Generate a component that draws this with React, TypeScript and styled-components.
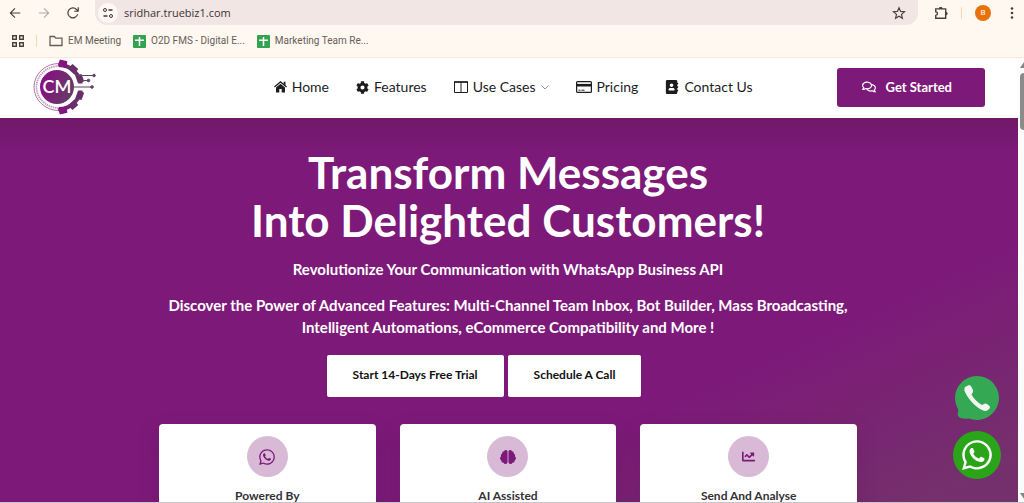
import React from "react";
import styled, { createGlobalStyle } from "styled-components";
import { FaCog, FaRegComments, FaWhatsapp, FaBrain, FaChartLine, FaAddressBook } from "react-icons/fa";

const purple = "#7d1a79";

const GlobalStyle = createGlobalStyle`
  * { box-sizing: border-box; }
  body { margin: 0; background: #fff; font-family: Lato, sans-serif; }
  h1, h2, p, ul { margin: 0; padding: 0; }
  a { color: inherit; text-decoration: none; }
  button { font: inherit; border: 0; cursor: pointer; }
  svg { display: block; flex: none; }
`;

const Window = styled.div`
  height: 100vh;
  display: flex;
  flex-direction: column;
  overflow: hidden;
`;

const Browser = styled.div`
  flex: none;
  background: #fef8f1;
  border-bottom: 1px solid #fbe6dc;
  font-family: Roboto, sans-serif;
`;

const Toolbar = styled.div`
  height: 25px;
  display: flex;
  align-items: center;
  padding: 0 4px 0 8px;
`;

const ToolButton = styled.button<{ $faded?: boolean }>`
  width: 29px;
  height: 24px;
  padding: 0;
  display: flex;
  align-items: center;
  background: none;
  color: ${(p) => (p.$faded ? "#b3aca7" : "#4a403a")};
`;

const AddressBar = styled.div`
  flex: 1;
  height: 25px;
  display: flex;
  align-items: center;
  gap: 6px;
  padding: 0 12px 0 3px;
  border-radius: 0 0 12px 12px;
  background: #f1e6e4;
`;

const SiteInfo = styled.button`
  width: 20px;
  height: 20px;
  padding: 0;
  display: grid;
  place-items: center;
  border-radius: 50%;
  background: #fef8f6;
  color: #3f3632;
`;

const Address = styled.input`
  flex: 1;
  min-width: 0;
  padding: 0;
  border: 0;
  outline: 0;
  background: none;
  color: #3c3432;
  font: 11px/16px "Open Sans", sans-serif;
`;

const BarButton = styled.button`
  padding: 0;
  background: none;
  color: #4a403a;
`;

const BrowserActions = styled.div`
  display: flex;
  align-items: center;
  gap: 13px;
  padding-left: 16px;
`;

const Divider = styled.span`
  width: 1px;
  height: 12px;
  background: #fcd5ab;
`;

const Avatar = styled.button`
  width: 16px;
  height: 16px;
  padding: 0;
  border-radius: 50%;
  background: #e8710a;
  color: #fff;
  font-size: 8px;
  line-height: 16px;
  text-align: center;
`;

const Bookmarks = styled.nav`
  height: 32px;
  display: flex;
  align-items: center;
  gap: 12px;
  padding-left: 12px;
  color: #675d58;
  font-size: 10px;
  line-height: 16px;
`;

const Bookmark = styled.a`
  display: flex;
  align-items: center;
  gap: 5px;
`;

const View = styled.div`
  flex: 1;
  min-height: 0;
  display: flex;
  border-bottom: 1px solid #c9c4c8;
`;

const Site = styled.div`
  flex: 1;
  min-width: 0;
  position: relative;
  display: flex;
  flex-direction: column;
  overflow: hidden;
`;

const Header = styled.header`
  flex: none;
  height: 60px;
  display: flex;
  align-items: center;
  padding: 0 33px 2px;
  background: #fff;
`;

const Brand = styled.a`
  margin-right: auto;
`;

const Menu = styled.nav`
  display: flex;
  gap: 27px;
  margin-right: 84px;
  color: #1d1d1f;
  font-size: 14px;
  line-height: 20px;
`;

const MenuLink = styled.a`
  display: flex;
  align-items: center;
  gap: 5px;
`;

const GetStarted = styled.button`
  height: 39px;
  display: flex;
  align-items: center;
  gap: 10px;
  padding: 0 33px 0 25px;
  border-radius: 3px;
  background: ${purple};
  color: #fff;
  font-size: 13px;
  font-weight: 700;
`;

const Hero = styled.main`
  flex: 1;
  min-height: 0;
  padding: 30px 18px 0 16px;
  overflow: hidden;
  text-align: center;
  color: #fff;
  background:
    linear-gradient(rgba(80, 20, 70, 0.3), rgba(80, 20, 70, 0) 40px),
    linear-gradient(155deg, ${purple} 70%, #74306c 95%);
`;

const Title = styled.h1`
  font-size: 44px;
  line-height: 48px;
  font-weight: 700;
`;

const Lead = styled.p`
  margin-top: 14px;
  font-size: 15px;
  line-height: 22px;
  font-weight: 700;
`;

const HeroActions = styled.div`
  display: flex;
  justify-content: center;
  gap: 4px;
  margin-top: 17px;
  padding-right: 48px;
`;

const WhiteButton = styled.button`
  height: 42px;
  padding: 0 26px 3px;
  border-radius: 2px;
  background: #fff;
  color: #111;
  font-size: 12px;
  font-weight: 700;
`;

const Cards = styled.section`
  display: grid;
  grid-template-columns: repeat(3, 1fr);
  gap: 24px;
  max-width: 698px;
  margin: 27px auto 0;
`;

const Card = styled.article`
  display: flex;
  flex-direction: column;
  align-items: center;
  gap: 9px;
  padding: 12px 16px 32px;
  border-radius: 4px;
  background: #fff;
  box-shadow: 0 8px 20px rgba(80, 20, 70, 0.25);
`;

const CardIcon = styled.span`
  width: 41px;
  height: 41px;
  display: grid;
  place-items: center;
  border-radius: 50%;
  background: #d8bad7;
  color: ${purple};
`;

const CardTitle = styled.h2`
  color: #333136;
  font-size: 12px;
  line-height: 20px;
  font-weight: 700;
`;

const Floating = styled.div`
  position: absolute;
  right: 17px;
  bottom: 23px;
  display: flex;
  flex-direction: column;
  align-items: center;
  gap: 11px;
`;

const ChatLink = styled.a`
  width: 48px;
  height: 48px;
  display: grid;
  place-items: center;
  border-radius: 50%;
  background: #2aa51a;
  color: #fff;
`;

const Scroll = styled.div`
  width: 6px;
  padding: 4px 0 0 2px;
  display: flex;
  flex-direction: column;
  gap: 5px;
  overflow: hidden;
  background: #fcfcfc;
`;

const Thumb = styled.span`
  width: 8px;
  height: 57px;
  margin-bottom: auto;
  border-radius: 4px;
  background: #8b8b8b;
`;

const Icon = ({ w = 14, h = w, box = "0 0 24 24", children }: { w?: number; h?: number; box?: string; children: React.ReactNode }) => (
  <svg width={w} height={h} viewBox={box} fill="none" stroke="currentColor" strokeWidth="2" aria-hidden="true">
    {children}
  </svg>
);

const Sheet = () => (
  <svg width="13" height="13" viewBox="0 0 13 13" aria-hidden="true">
    <rect width="13" height="13" rx="1" fill="#34a350" />
    <path d="M6.5 2v9M2 5.2h9" stroke="#fff" strokeWidth="1.5" />
  </svg>
);

const teeth = [-76, -48, -20, 20, 48, 76];

const Logo = () => (
  <svg width="64" height="58" viewBox="0 -1 64 58" role="img" aria-label="CM">
    <defs>
      <linearGradient id="brand" gradientUnits="userSpaceOnUse" x1="12" y1="20" x2="46" y2="34">
        <stop offset="0" stopColor="#85127f" />
        <stop offset="1" stopColor="#5e4560" />
      </linearGradient>
      <linearGradient id="gear" gradientUnits="userSpaceOnUse" x1="26" y1="0" x2="50" y2="0">
        <stop offset="0" stopColor="#85127f" />
        <stop offset="1" stopColor="#5e3f60" />
      </linearGradient>
    </defs>
    <g fill="none" stroke="#8a3a87">
      <path d="M26 4.500A25 23.500 0 0 0 26 51.500" strokeWidth=".7" />
      <path d="M26 7A22.500 21 0 0 0 26 49" strokeWidth="1.800" strokeDasharray="1.500 .7" opacity=".5" />
    </g>
    <path d="M26 4A24 24 0 0 1 26 52V48A20 20 0 0 0 26 8Z" fill="url(#gear)" />
    {teeth.map((a) => (
      <path
        key={a}
        d="M45 23.500L51.500 24.200V31.800L45 32.500Z"
        transform={`rotate(${a} 24 28)`}
        fill={Math.abs(a) === 76 ? "#82157c" : "#692f69"}
      />
    ))}
    <circle cx="24" cy="28" r="17" fill="url(#brand)" />
    <path d="M42.500 24.500H64V31.500H42.500Z" fill="#fff" />
    <g stroke="#5e4560" fill="#5e4560">
      <path d="M44 16.500H61M46 21.500H55M40 28H59" fill="none" strokeWidth="1.200" />
      <circle cx="61" cy="16.500" r="1.300" />
      <circle cx="55.500" cy="21.500" r="1.300" />
      <circle cx="59" cy="28" r="1.300" />
    </g>
    <text x="24" y="34" textAnchor="middle" fill="#fff" fontFamily="Lato, sans-serif" fontWeight="600" fontSize="18">
      CM
    </text>
  </svg>
);

export default function App() {
  return (
    <Window>
      <GlobalStyle />
      <Browser>
        <Toolbar>
          <ToolButton aria-label="Back">
            <Icon><path d="M21 12H4M12 4l-8 8 8 8" /></Icon>
          </ToolButton>
          <ToolButton aria-label="Forward" $faded>
            <Icon><path d="M3 12h17M12 4l8 8-8 8" /></Icon>
          </ToolButton>
          <ToolButton aria-label="Reload">
            <Icon><path d="M20 14a8.500 8.500 0 1 1-2-8l3 3M21 2v7h-7" /></Icon>
          </ToolButton>
          <AddressBar>
            <SiteInfo aria-label="Site information">
              <Icon w={12}><circle cx="6" cy="6" r="3" /><path d="M13 6h8M3 18h8" strokeWidth="3" /><circle cx="18" cy="18" r="3" /></Icon>
            </SiteInfo>
            <Address aria-label="Address" defaultValue="sridhar.truebiz1.com" />
            <BarButton aria-label="Bookmark this page">
              <Icon><path d="M12 3l2.700 6.200 6.800.6-5.200 4.500 1.600 6.700-5.900-3.600L6.100 21l1.600-6.700L2.500 9.800l6.800-.6z" /></Icon>
            </BarButton>
          </AddressBar>
          <BrowserActions>
            <BarButton aria-label="Extensions">
              <Icon w={14}>
                <path d="M3 5h6.500a2 2 0 0 1 4 0H20v6a2 2 0 0 1 0 4v6H3v-5a3 3 0 0 0 0-6z" strokeWidth="2.400" />
                <path d="M9.500 4.500a2 2 0 0 1 4 0zM20 11a2 2 0 0 1 0 4z" fill="currentColor" />
              </Icon>
            </BarButton>
            <Divider />
            <Avatar aria-label="Profile B">B</Avatar>
            <BarButton aria-label="Browser menu">
              <svg width="16" height="14" viewBox="0 0 16 14" fill="currentColor"><circle cx="8" cy="2.500" r="1.300" /><circle cx="8" cy="7" r="1.300" /><circle cx="8" cy="11.500" r="1.300" /></svg>
            </BarButton>
          </BrowserActions>
        </Toolbar>
        <Bookmarks aria-label="Bookmarks">
          <BarButton aria-label="Apps">
            <Icon w={12} box="0 0 12 12"><path d="M.7.700h3.600v3.600H.7zM7.700.700h3.600v3.600H7.700zM.7 7.700h3.600v3.600H.7zM7.700 7.700h3.600v3.600H7.700z" strokeWidth="1.400" /></Icon>
          </BarButton>
          <Divider />
          <Bookmark href="#em">
            <Icon w={14} h={12} box="0 0 14 12"><path d="M1 1.500h4.300l1.500 1.700H13v7.300H1z" strokeWidth="1.300" /></Icon>
            EM Meeting
          </Bookmark>
          <Bookmark href="#o2d"><Sheet />O2D FMS - Digital E...</Bookmark>
          <Bookmark href="#marketing"><Sheet />Marketing Team Re...</Bookmark>
        </Bookmarks>
      </Browser>
      <View>
        <Site>
          <Header>
            <Brand href="#top"><Logo /></Brand>
            <Menu aria-label="Main">
              <MenuLink href="#home">
                <svg width="13" height="12" viewBox="0 0 13 12" fill="currentColor"><path d="M6.500 0L13 5.600l-.8 1L6.500 1.800.8 6.600 0 5.600zM9.700.8h1.800v3.400L9.700 2.600z" /><path d="M6.500 2.700L11 6.500V11.500H7.700V8H5.300v3.500H2V6.500z" /></svg>
                Home
              </MenuLink>
              <MenuLink href="#features"><FaCog size={13} />Features</MenuLink>
              <MenuLink href="#use-cases">
                <Icon w={14} h={12} box="0 0 14 12"><path d="M.5 1h13v10.500H.5zM7 1v10.500" strokeWidth="1" /><path d="M0 1h14" strokeWidth="1.500" /></Icon>
                Use Cases
                <Icon w={8} h={5} box="0 0 8 5"><path d="M.5.500L4 4 7.500.500" strokeWidth=".8" opacity=".6" /></Icon>
              </MenuLink>
              <MenuLink href="#pricing">
                <Icon w={16} h={12} box="0 0 16 12"><rect x=".6" y=".6" width="14.800" height="10.800" rx="1" strokeWidth="1.200" /><path d="M1 4.200h14" strokeWidth="2.600" /><path d="M2.500 9.200h2M5.500 9.200h3" strokeWidth="1" /></Icon>
                Pricing
              </MenuLink>
              <MenuLink href="#contact"><FaAddressBook size={14} />Contact Us</MenuLink>
            </Menu>
            <GetStarted><FaRegComments size={14} />Get Started</GetStarted>
          </Header>
          <Hero>
            <Title>Transform Messages<br />Into Delighted Customers!</Title>
            <Lead>Revolutionize Your Communication with WhatsApp Business API</Lead>
            <Lead>
              Discover the Power of Advanced Features: Multi-Channel Team Inbox, Bot Builder, Mass Broadcasting,
              <br />
              Intelligent Automations, eCommerce Compatibility and More !
            </Lead>
            <HeroActions>
              <WhiteButton>Start 14-Days Free Trial</WhiteButton>
              <WhiteButton>Schedule A Call</WhiteButton>
            </HeroActions>
            <Cards>
              <Card><CardIcon><FaWhatsapp size={18} /></CardIcon><CardTitle>Powered By</CardTitle></Card>
              <Card><CardIcon><FaBrain size={16} /></CardIcon><CardTitle>AI Assisted</CardTitle></Card>
              <Card><CardIcon><FaChartLine size={13} /></CardIcon><CardTitle>Send And Analyse</CardTitle></Card>
            </Cards>
          </Hero>
          <Floating>
            <a href="#call" aria-label="Call us">
              <svg width="44" height="44" viewBox="0 0 44 44">
                <path d="M22 0A22 22 0 1 1 14 42.500C10 43 5 43 3 40C2 37 4 35 3 33A22 22 0 0 1 22 0Z" fill="#35a853" />
                <path d="M10 11L14 9Q15.500 9 16.200 10.500L18 14Q18.500 15.500 17.500 17L16.500 18.500Q20 25 27 29L29 28Q30.500 27 32 28L34.500 30Q35.500 31 34.500 32.500L33 34Q30 36 26 33.500C18 29 12 21 9.500 15Q9 12.500 10 11Z" fill="#f2f5f2" />
              </svg>
            </a>
            <ChatLink href="#whatsapp" aria-label="Chat on WhatsApp"><FaWhatsapp size={34} /></ChatLink>
          </Floating>
        </Site>
        <Scroll aria-hidden="true">
          <svg width="8" height="6" viewBox="0 0 8 6"><path d="M4 0l4 6H0z" fill="#858585" /></svg>
          <Thumb />
          <svg width="8" height="9" viewBox="0 0 8 9"><path d="M0 0h8L4 6z" fill="#858585" /></svg>
        </Scroll>
      </View>
    </Window>
  );
}
